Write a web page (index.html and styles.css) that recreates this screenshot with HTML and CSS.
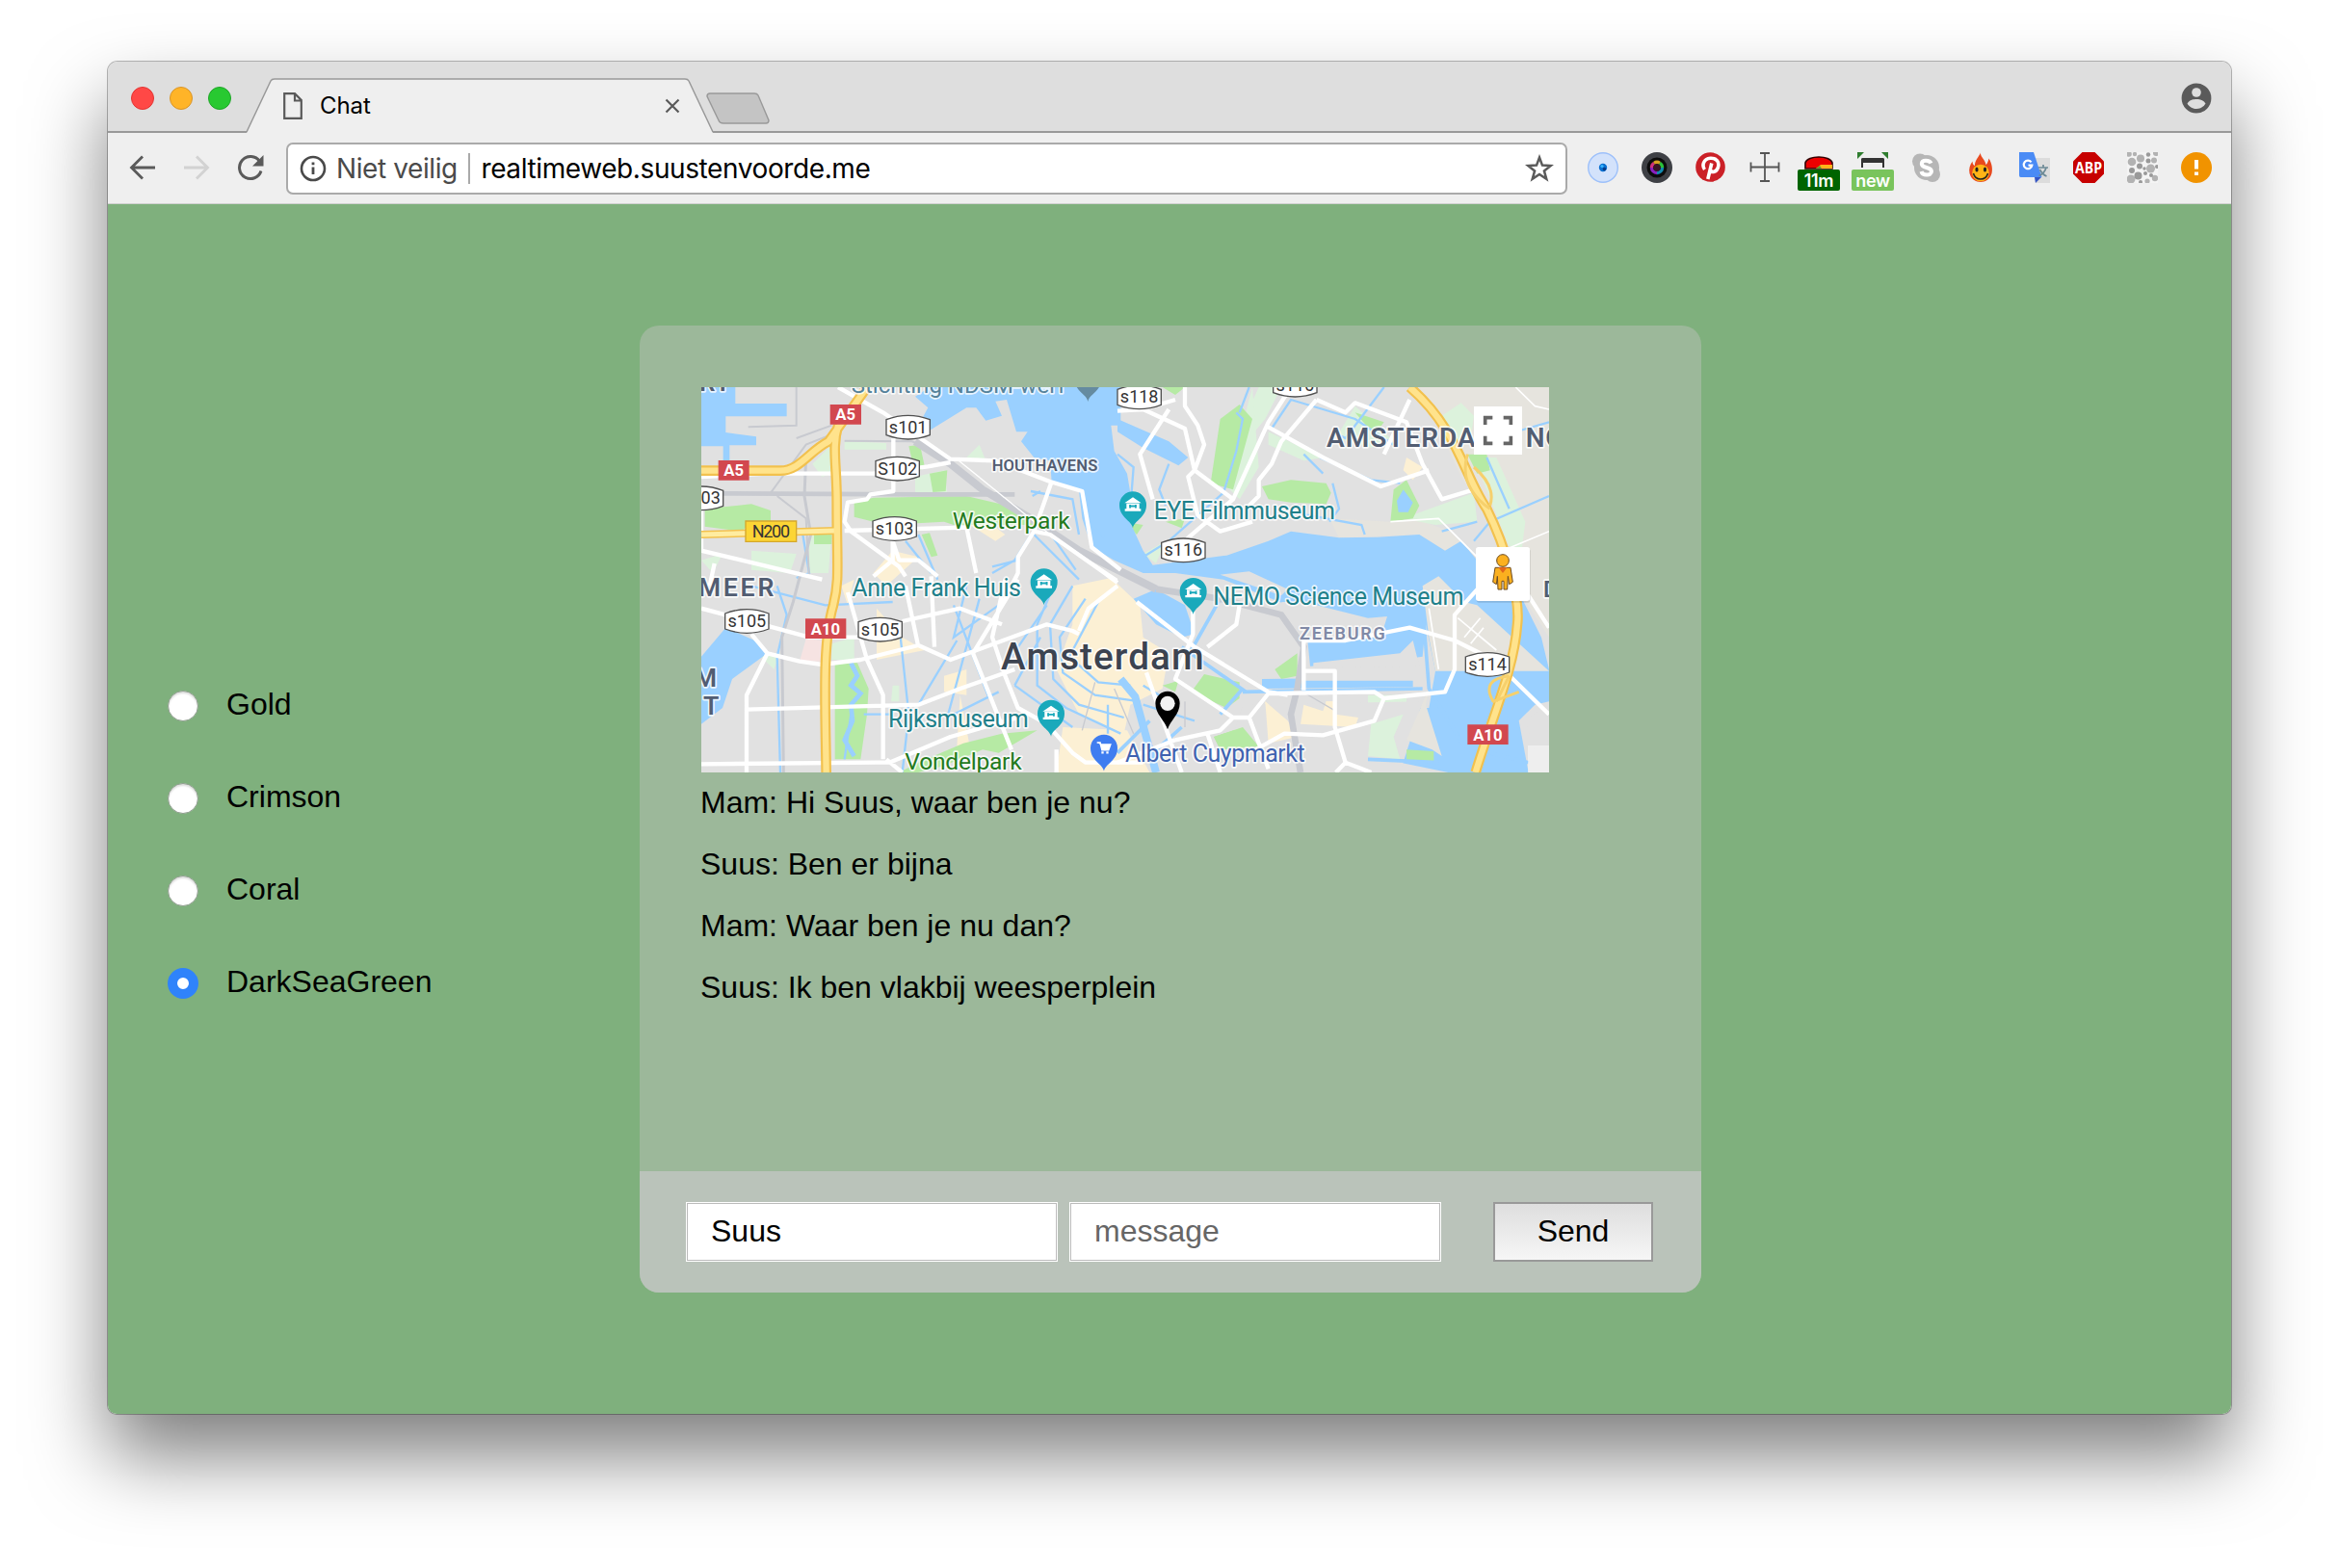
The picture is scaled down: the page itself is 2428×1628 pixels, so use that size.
FILE: index.html
```html
<!DOCTYPE html>
<html lang="nl">
<head>
<meta charset="utf-8">
<title>Chat</title>
<link rel="stylesheet" href="styles.css">
</head>
<body>
<div class="window">
  <header class="tabstrip">
    <div class="lights"><i class="light red"></i><i class="light amber"></i><i class="light green"></i></div>
    <div class="tab">
      <svg class="tab-shape" viewBox="0 0 546 57" width="546" height="57"><path d="M30 57L55 3Q56 1 59 1H485Q488 1 489 3L514 57Z" fill="#efefef"/><path d="M30 56L55 3Q56 1 59 1H485Q488 1 489 3L514 56" fill="none" stroke="#999" stroke-width="1.5"/></svg>
      <svg class="doc" viewBox="0 0 20 28" width="20" height="28"><path d="M1.2 1.2H12L18.8 8V26.8H1.2ZM12 1.2V8.5H18.8" fill="none" stroke="#5a5a5a" stroke-width="2.2"/></svg>
      <span class="tab-title">Chat</span>
      <svg class="close" viewBox="0 0 16 16" width="16" height="16"><path d="M1.5 1.5L14.5 14.5M14.5 1.5L1.5 14.5" stroke="#5a5a5a" stroke-width="2.2"/></svg>
    </div>
    <svg class="newtab" viewBox="0 0 66 33" width="66" height="33"><path d="M4 1H50Q53 1 54 3L65 29Q65 32 62 32H18Q14 32 13 29L1 4Q1 1 4 1Z" fill="#c4c4c4" stroke="#999" stroke-width="1.4"/></svg>
    <svg class="profile" viewBox="0 0 32 32" width="32" height="32"><circle cx="16" cy="16" r="15.4" fill="#5a5a5a"/><circle cx="16" cy="10" r="4.8" fill="#dedede"/><path d="M6.5 21.500C9 17.500 13 17 16 17S23 17.500 25.500 21.500C23 25.500 19.500 27 16 27S9 25.500 6.500 21.500Z" fill="#dedede"/></svg>
  </header>
  <nav class="toolbar">
    <div class="nav">
      <svg viewBox="0 0 28 28" width="28" height="28"><path d="M27 14H3M14 2.500L2.500 14L14 25.500" fill="none" stroke="#5a5a5a" stroke-width="2.800"/></svg>
      <svg viewBox="0 0 28 28" width="28" height="28"><path d="M1 14H25M14 2.500L25.500 14L14 25.500" fill="none" stroke="#d2d2d2" stroke-width="2.800"/></svg>
      <svg viewBox="0 0 28 28" width="28" height="28"><path d="M23.500 7.500A11.500 11.500 0 1 0 25 17.500" fill="none" stroke="#5a5a5a" stroke-width="3"/><path d="M27.500 1V12.500H16Z" fill="#5a5a5a"/></svg>
    </div>
    <div class="urlbar">
      <svg viewBox="0 0 28 28" width="28" height="28"><circle cx="14" cy="14" r="12" fill="none" stroke="#4a4a4a" stroke-width="2.600"/><path d="M14 12.500V20M14 7.500V10.200" stroke="#4a4a4a" stroke-width="2.800"/></svg>
      <span class="secure">Niet veilig</span>
      <span class="sep"></span>
      <span class="url">realtimeweb.suustenvoorde.me</span>
      <svg class="star" viewBox="0 0 30 30" width="30" height="30"><path d="M15 3.500L18 11.600L26.800 12L19.900 17.400L22.300 25.800L15 21L7.700 25.800L10.100 17.400L3.200 12L12 11.600Z" fill="none" stroke="#5a5a5a" stroke-width="2.500"/></svg>
    </div>
    <div class="exts">
      <span class="ext"><svg viewBox="0 0 32 32"><circle cx="16" cy="16" r="15.300" fill="#d3e2fb" stroke="#9dc0fa" stroke-width="1.400"/><circle cx="16" cy="16" r="4.200" fill="#0a6fd0"/><circle cx="15" cy="14.500" r="1.600" fill="#39b5ff"/><circle cx="17.500" cy="17.500" r="1.800" fill="#073a86"/></svg></span>
      <span class="ext"><svg viewBox="0 0 32 32"><circle cx="16" cy="16" r="16" fill="#3e4045"/><circle cx="16" cy="16" r="10.500" fill="#0c0c0c"/><g fill="none" stroke-width="3.400"><path d="M10.500 16A5.500 5.500 0 0 1 13 11.300" stroke="#d0307a"/><path d="M13 11.300A5.500 5.500 0 0 1 19 11.300" stroke="#d8a020"/><path d="M19 11.300A5.500 5.500 0 0 1 21.500 16" stroke="#2bc03a"/><path d="M21.500 16A5.500 5.500 0 0 1 16 21.500" stroke="#118ab0"/><path d="M16 21.500A5.500 5.500 0 0 1 10.500 16" stroke="#8a20c0"/></g><circle cx="16" cy="16" r="3.800" fill="#3a1526"/></svg></span>
      <span class="ext"><svg viewBox="0 0 32 32"><circle cx="15.500" cy="15.500" r="15.300" fill="#cb2027"/><path d="M9.500 18C6.500 14 8 7 15.500 6.300C22 6 25 10.500 23.500 15.500C22 21 17 21.500 15.200 18.500M16.800 11.500L12.800 28" fill="none" stroke="#fff" stroke-width="3.600"/></svg></span>
      <span class="ext"><svg viewBox="0 0 32 32"><path d="M16 1V30M11 1H21M11 30H21M1.500 15.500H30.500M1.500 10.500V20.500M30.500 10.500V20.500" stroke="#555" stroke-width="1.800"/></svg></span>
      <span class="ext"><svg viewBox="0 0 32 32"><path d="M2 17V11C4 3 28 3 30 11V17Z" fill="#e00" stroke="#300" stroke-width="1.600"/><path d="M13 17L18 13H30V17Z" fill="#ffb31a"/><path d="M13 17L17 14L19 17Z" fill="#5aa02c"/></svg><b class="badge dark">11m</b></span>
      <span class="ext"><svg viewBox="0 0 32 32"><path d="M0 0H7L0 7ZM32 0H25L32 7Z" fill="#2f7d2f"/><path d="M5 16V8Q5 7 6 7H26Q27 7 27 8V16" fill="none" stroke="#333" stroke-width="2"/><path d="M4 8Q4 6 6 6H26Q28 6 28 8V11H4Z" fill="#333"/></svg><b class="badge light-green">new</b></span>
      <span class="ext"><svg viewBox="0 0 32 32"><circle cx="16" cy="16" r="13" fill="#b6b6b6"/><circle cx="9" cy="9.500" r="8" fill="#b6b6b6"/><circle cx="22" cy="23" r="8" fill="#b6b6b6"/><path d="M20.500 11.500C19 8 11 7.500 10.800 12C10.800 17.500 21 14.500 21 20C20.800 25 11.500 24.500 10.500 20" fill="none" stroke="#fff" stroke-width="4"/></svg></span>
      <span class="ext"><svg viewBox="0 0 32 32"><path d="M16 0.500C15 4 21 8 21.500 13C23 12 24 9 24.500 6.500C28 12 28.500 18 27.500 22C26 28 21 31 16 31S6 28 4.500 22C3.500 17 5 13 7.500 9.500C7.500 12 8.500 13.500 10 14C9.500 9 14 5 16 .5Z" fill="#e8491d"/><circle cx="16" cy="21.500" r="8.800" fill="#ffb416"/><ellipse cx="12" cy="18" rx="1.600" ry="2.500" fill="#222"/><ellipse cx="20.500" cy="18" rx="1.600" ry="2.500" fill="#222"/><path d="M8.500 22Q10 28 16 28T23.500 22" fill="none" stroke="#222" stroke-width="1.500"/></svg></span>
      <span class="ext"><svg viewBox="0 0 32 32"><path d="M12 6H32V32H17Z" fill="#dcdcdc"/><path d="M16 26H23L17 32Z" fill="#3455c4"/><path d="M0 0H15L23.500 26H1.500Q0 26 0 24Z" fill="#4a8bf5"/><path d="M20 16H30M25 13V16M28 16Q26.500 22 20.500 24.500M21.500 18Q24 23 28.500 25" fill="none" stroke="#6d8a96" stroke-width="1.700"/><path d="M12.500 10.300A4.300 4.300 0 1 0 13.300 13.700H9.500" fill="none" stroke="#fff" stroke-width="2.200"/></svg></span>
      <span class="ext"><svg viewBox="0 0 32 32"><path d="M9.500 0H22.500L32 9.500V22.500L22.500 32H9.500L0 22.500V9.500Z" fill="#c70000"/><text x="16" y="21.800" class="abp" textLength="28" lengthAdjust="spacingAndGlyphs">ABP</text></svg></span>
      <span class="ext"><svg viewBox="0 0 32 32"><path d="M0 0H32V32H0Z" fill="#f4f4f4"/><g fill="#b2b2b2"><circle cx="5" cy="10" r="4.300"/><circle cx="14" cy="6.500" r="4"/><circle cx="24.500" cy="17" r="4.500"/><circle cx="4" cy="28" r="4.500"/><circle cx="28" cy="8.500" r="3"/><circle cx="2" cy="2" r="2.800"/><circle cx="8" cy="2" r="2.200"/><circle cx="30" cy="1" r="3"/><circle cx="29" cy="27" r="3.200"/><circle cx="21" cy="30" r="2.600"/></g><g fill="#999"><circle cx="11.500" cy="24.500" r="4"/><circle cx="13" cy="14.500" r="3"/><circle cx="22" cy="9" r="2.500"/><circle cx="5" cy="19" r="3"/><circle cx="19" cy="22" r="2"/><circle cx="22" cy="2.500" r="2.200"/><circle cx="25" cy="24" r="2"/><circle cx="31" cy="15" r="2"/><circle cx="14" cy="31" r="2"/><circle cx="18" cy="17" r="1.700"/></g></svg></span>
      <span class="ext"><svg viewBox="0 0 32 32"><circle cx="16" cy="16" r="16" fill="#f19300"/><path d="M16 8V17.500M16 20.500V24" stroke="#fff" stroke-width="4"/></svg></span>
    </div>
  </nav>
  <main class="page">
    <form class="colors">
      <label><i class="radio"></i>Gold</label>
      <label><i class="radio"></i>Crimson</label>
      <label><i class="radio"></i>Coral</label>
      <label><i class="radio checked"></i>DarkSeaGreen</label>
    </form>
    <section class="card">
      <div class="messages">
        <svg class="map" viewBox="24 21 2640 1200" width="880" height="400">
          <defs>
            <path id="shield" d="M-68-24Q0-50 68-24V24Q0 50-68 24Z" fill="#fff" stroke="#505050" stroke-width="4"/>
            <path id="pin" d="M0 72C-4 48-42 40-42 0A42 42 0 0 1 42 0C42 40 4 48 0 72Z"/>
            <g id="museum"><use href="#pin" fill="#1aa9bb"/><path d="M-26-6L0-24L26-6ZM-20-5H20V12H-20ZM-25 12H25V19H-25Z" fill="#fff"/><path d="M-11 9V-4M11 9V-4M-11 2H11" transform="translate(0 2) scale(.8)" stroke="#1aa9bb" stroke-width="7"/></g>
          </defs>
          <rect x="24" y="21" width="2640" height="1200" fill="#e1e1e1"/>
          <g fill="#e6e4de">
            <path d="M2260 21H2664V700L2520 500L2390 300Z"/>
            <path d="M1980 430L2170 440L2240 430L2360 470L2440 560L2340 530L2260 480L2010 490Z"/>
          </g>
          <g fill="#dcf2dc">
            <path d="M370 260L430 200L430 290L400 300ZM690 300L780 280L790 350L690 350ZM840 250L890 200L910 250ZM24 560L90 540L60 600ZM180 530L320 540L300 600L180 590ZM360 470L430 470L420 600L360 600Z"/>
            <path d="M1760 21H1830L1780 120L1730 180L1720 110ZM1790 160L1960 240L1900 250L1790 200ZM2060 80L2170 180L2110 210L2000 180ZM2330 110L2390 70L2430 110L2420 180L2380 190ZM2210 430L2430 350L2440 440L2310 450ZM2430 240L2500 240L2590 440L2580 520H2540Z"/>
            <path d="M430 820L500 800L500 870H430ZM200 850L270 850L250 900ZM2040 740L2190 730L2100 780ZM2100 980H2220V1060L2100 1120Z"/>
            <path d="M1400 540L1470 500L1440 570ZM470 190L600 195V215H470ZM620 950L640 950V1000H615ZM1740 21L1660 330L1700 370L1760 270Z"/>
          </g>
          <g fill="#fcf0d4">
            <path d="M790 430L880 410L970 480L940 500L860 450ZM620 530L700 550L600 640L560 600Z"/>
            <path d="M1180 640L1300 615L1390 700L1400 800L1480 850L1460 960L1360 1010L1340 1100L1200 1040L1130 900L1180 760Z"/>
            <path d="M1150 1080L1350 1090L1420 1221H1130ZM780 920L850 900L850 980L780 970ZM570 710L650 800L720 840L570 870ZM1780 1000L1850 1060L1880 1110L1790 1130ZM1900 1010L1960 1030L1970 1000L2000 1000L2000 1040L2070 1050L2060 1080L1890 1070ZM2220 240L2270 270L2240 310L2210 280ZM830 980L860 1140H820ZM460 640L500 620L480 700Z"/>
          </g>
          <path d="M350 805L405 810L400 875H330Z" fill="#f6e3e2"/>
          <g fill="#b6eaa4">
            <path d="M670 205L705 200L720 270L690 290ZM500 380L560 365L850 360L1020 400L1080 450H810L780 440L600 450L500 425ZM35 400L180 385L240 405V450L170 450L150 470L35 455ZM735 290L790 280L785 345L745 348ZM710 480L735 475L760 545L740 550ZM375 480H430V510H375Z"/>
            <path d="M1640 120L1700 75L1740 120L1680 340L1610 320ZM1770 330L1860 310L1970 320L1985 350L1970 385L1860 380L1790 370ZM2170 440L2180 340L2220 310L2260 390L2240 430ZM2060 100L2150 130L2120 170ZM2410 230L2470 230L2480 280L2440 290ZM1470 440L1530 430L1520 460ZM1460 21H1530L1500 45ZM1340 440L1400 450L1380 480Z"/>
            <path d="M440 880L510 880L545 960L540 1040L520 1180L440 1180ZM840 1130L960 1100L1070 1090L950 1160L900 1150L780 1200L700 1221H640L700 1190ZM1590 915L1700 940L1700 990L1660 1020L1550 970ZM1810 900L1880 850L1880 920L1830 930ZM1620 1110L1710 1080L1760 1140L1640 1150ZM2220 1150L2305 1155V1190L2220 1185ZM1460 950L1510 935L1500 970Z"/>
          </g>
          <g fill="#9ad0ff">
            <path d="M24 21H130V72H290V112H100V162L195 175V202H112V250H92V205H24Z"/>
            <path d="M735 21H1330V140H1300L1310 220L1350 290L1360 350L1340 400L1400 530L1430 575L1660 545L1790 500L1860 470L2010 490L2130 488L2260 480L2340 530L2390 500L2440 560L2520 600L2560 640L2640 800L2664 900V1000L2620 1010L2570 1060L2600 1221H2350L2200 1190L2180 1110L2230 1020L2290 1020L2310 905L2280 760L2270 860L2200 870L1920 890L1910 790L1850 700L1650 620L1500 600L1400 600L1310 560L1240 520L1210 430L1200 345L1115 315L1110 250L1060 240L1020 190L1040 160L1005 160L975 60L940 65L960 110L910 125L880 85L850 85L720 165L700 140L730 85L690 50Z"/>
            <path d="M24 860L100 770L190 810L230 850L120 930L90 1020L24 1070Z"/>
            <path d="M1370 680L1440 650L1530 700L1560 790L1520 800L1440 760ZM2190 375L2210 340L2240 380L2225 410L2195 410ZM1770 930L2240 925V955L1770 960ZM1320 120L1480 190L1540 240L1510 265L1400 210L1320 160Z"/>
          </g>
          <g fill="#e1e1e1">
            <path d="M1560 850L1700 700L1800 740L1850 800L1830 880L1740 930ZM1600 800L1690 710L1730 730L1620 830ZM1830 690L1900 690L2100 740L2160 735L2140 800L1900 810ZM1930 880L2200 850L2240 810L2260 890L1930 895ZM1880 920H2270V935H1880ZM1710 1010L2270 1000L2200 1221H1640Z"/>
            <path d="M2590 1060L2664 1010V1221H2640ZM1640 605L1730 595L1850 650L1830 670Z"/>
          </g>
          <path d="M1780 1000L1850 1060L1880 1110L1790 1130ZM1900 1010L1960 1030L1970 1000H2000V1040L2070 1050L2060 1080L1890 1070Z" fill="#fcf0d4"/>
          <path d="M2110 1070L2210 1040L2180 1110L2200 1180L2100 1170Z" fill="#dcf2dc"/>
          <path d="M2270 640L2320 610L2400 690L2440 700L2664 905H2310L2290 800ZM2500 500L2664 560V800L2560 640ZM2290 960L2280 1010L2330 1170L2300 1150L2220 1120Z" fill="#e6e4de"/>
          <path d="M1620 1110L1710 1080L1760 1140L1640 1150ZM2220 1150L2305 1155V1190L2220 1185Z" fill="#b6eaa4"/>
          <g fill="none" stroke="#9ad0ff" stroke-width="7">
            <path d="M1050 345L1180 370L1200 480M1115 310L1070 450L1000 560L930 600M1060 480L1200 620M1120 490L1190 590M930 580L1010 560M1230 440L1280 490M660 500L740 600M700 480L760 620M340 480L360 600L320 615M1055 360L1080 345"/>
            <path d="M1690 100L1710 120L1690 220L1650 350L1480 500L1400 550M1730 21L1700 100M1800 150L1860 60L2060 120L2180 200M1950 240L2110 310L2200 320M1900 230L1960 290M2150 21L2030 180L2010 170M2470 240L2540 400M2430 500L2480 440L2664 360M2330 470L2440 440M1320 230L1370 270L1360 400M1480 260L1450 340L1470 390M1860 410L2080 450L2090 480M2490 180L2664 130M1990 320L2010 400L1980 440"/>
            <path d="M260 640L290 730L260 860L270 1221M180 640L410 700L620 690M490 1040L470 1180M530 1040L620 1040M640 760L670 1040L650 1221M810 700L920 990M820 810L700 1010M850 640L810 800L950 700M890 680L790 1050L950 970M1130 620L1070 760V950L1160 1020L1330 1100M1180 640L1110 760L1120 930L1200 1010L1340 1050M1220 680L1140 800L1150 910L1250 980L1390 1000M1260 690L1170 860L1260 940L1360 950M1000 950L1180 1080M1290 1010V1100M1080 800L1000 950M1400 950L1500 1010M1400 1010L1560 1060M1100 700L990 860"/>
            <path d="M1320 1160L1420 1060M1430 1160L1520 1080M1520 830L1720 970M1640 680L1550 840M1710 960L1640 1040M1710 970L2270 960M2270 700L2290 960L2400 1140L2600 1190M2100 1180L2320 1190" stroke-width="11"/>
            <path d="M1330 930L1375 985L1440 1221" stroke-width="24"/>
            <path d="M490 880L510 920L490 950L520 975L490 1010L495 1060L470 1120L500 1170" stroke-width="14"/>
          </g>
          <g fill="none" stroke="#c8cad0">
            <path d="M90 352L700 355L1000 355" stroke-width="14"/>
            <path d="M320 21V140L170 145M430 140L320 180M470 188L680 190L780 230M240 350L350 200L450 160M260 360L350 430L360 615" stroke-width="6"/>
            <path d="M350 240L345 360L365 480L310 690L275 800L280 1221" stroke-width="9"/>
            <path d="M690 190L800 260L900 340L1050 430L1200 530L1320 590L1440 650" stroke-width="24"/>
            <path d="M1440 650L1640 680L1830 730L1900 830L1880 960L1860 1040L1890 1221" stroke-width="20"/>
            <path d="M1250 940L1210 1090M1310 960L1370 1100M1880 960L2000 1030M1530 1000V1080" stroke-width="4"/>
          </g>
          <g fill="none" stroke="#fff" stroke-width="13" stroke-linejoin="round">
            <path d="M450 21L590 100L720 190L800 245L940 250L1110 315L1210 345L1240 520L1330 590M24 300L230 290H560L730 268L800 255M622 180V345L550 355L540 370L480 380L470 440L490 470L640 580L660 610M1115 315L1060 470L1110 480L1280 600L1320 630M1060 470L1010 550V600L960 700M470 468L850 458L880 600M24 380V530L400 620M620 500L640 560L700 560L760 610M65 570L50 640M620 500V560L560 610"/>
            <path d="M820 245L1110 480L1320 620" stroke-width="4"/>
            <path d="M1530 21V80L1570 140L1590 200L1560 280L1680 370L1790 130L1860 21M1480 90L1390 230L1430 370M1400 90L1530 150L1560 280M1940 60L1830 190L1800 260L1760 310V360L1730 390M1780 140L1960 240L2140 330L2290 280M1940 60L2030 100L2060 70L2220 130L2270 260L2330 370L2430 340L2500 460L2520 520M2230 60L2150 230M1560 280L1540 300L1570 420L1640 470L1740 440M1530 560L1540 490L1680 370M1320 95L1400 90L1500 60"/>
            <path d="M24 710L250 770L360 800L520 800M180 790L230 850L330 875L400 885L520 870L700 825L800 870L1100 760L1180 780L1200 790M230 850L165 980V1221M165 1025L700 1010L830 960L1000 900M24 1195L570 1190L610 1190L800 1110L1010 1050M480 660L540 870L590 980V1180M660 640L700 830M740 610L750 830M650 750L830 710L960 760M970 620L930 800L970 920L1010 1020L1100 1070L1180 1160L1221 1190H1400M1010 620L870 850L990 1150M1200 780L1230 710L1320 640M600 1180L650 1221M1130 1150V1221"/>
            <path d="M1380 690L1560 830L1790 970L1850 980M1555 720V790L1500 930L1680 1050L1730 1050L1790 975L2120 970L2150 990L2120 1060L1960 1105L1840 1100L1750 1150M1700 700L1690 760L1600 830M1900 800V965M1905 810L2030 810L2230 770L2370 810L2490 870L2664 1040M1905 905H1997V1080L2030 1190L2110 1221M2150 990L2340 970L2370 900V730L2450 640M2600 670L2664 770M1730 1050L1790 1210M1500 1120L1640 1090L1680 1050M1410 910L1480 1110L1520 1221M1600 1100L1640 1221M1320 1190L1500 1120M2030 1190L2000 1221"/>
            <path d="M2560 21L2620 80L2664 90M2170 440L2320 430L2440 550M2520 530L2664 470M2290 710L2320 900M2380 740L2500 840M2400 800L2450 740M2420 820L2460 770" stroke-width="5"/>
          </g>
          <g fill="none" stroke-linejoin="round">
            <path d="M24 281H270C330 281 360 220 420 190L540 21M450 140C430 210 446 260 446 380C446 580 455 620 435 700C400 820 410 1000 413 1221M2230 21C2380 150 2400 300 2470 400C2530 520 2575 680 2565 760C2555 900 2490 1040 2435 1221" stroke="#f2c14e" stroke-width="32"/>
            <path d="M24 480L440 468" stroke="#f2c14e" stroke-width="24"/><path d="M24 480L440 468" stroke="#ffeca0" stroke-width="15"/>
            <path d="M24 281H270C330 281 360 220 420 190L540 21M450 140C430 210 446 260 446 380C446 580 455 620 435 700C400 820 410 1000 413 1221M2230 21C2380 150 2400 300 2470 400C2530 520 2575 680 2565 760C2555 900 2490 1040 2435 1221" stroke="#ffe38c" stroke-width="19"/>
            <path d="M2410 230Q2380 330 2480 400M2430 270Q2500 330 2480 390M2540 920Q2450 930 2490 1000L2570 970M2500 1000L2540 920" stroke="#f6d06c" stroke-width="9"/>
          </g>
          <g class="halo">
            <text x="18" y="34" class="area" font-size="78">RT</text>
            <text x="491" y="40" fill="#56839b" font-size="72" textLength="667">Stichting NDSM-werf</text>
            <text x="929" y="283" class="area" font-size="50" textLength="331">HOUTHAVENS</text>
            <text x="1971" y="208" class="area" font-size="84" textLength="466">AMSTERDA</text>
            <text x="2440" y="208" class="area" font-size="84">M</text>
            <text x="2591" y="208" class="area" font-size="84">NO</text>
            <text x="14" y="671" class="area" font-size="80" textLength="238">MEER</text>
            <text x="2" y="955" class="area" font-size="80">M</text>
            <text x="30" y="1040" class="area" font-size="80">T</text>
            <text x="2646" y="676" class="area" font-size="70">D</text>
            <text x="1887" y="806" fill="#8089a6" font-size="54" font-weight="600" textLength="266">ZEEBURG</text>
            <text x="806" y="461" class="park" textLength="366">Westerpark</text>
            <text x="658" y="1212" class="park" textLength="364">Vondelpark</text>
            <text x="1433" y="431" class="poi" textLength="565">EYE Filmmuseum</text>
            <text x="493" y="673" class="poi" textLength="527">Anne Frank Huis</text>
            <text x="606" y="1080" class="poi" textLength="437">Rijksmuseum</text>
            <text x="1618" y="699" class="poi" textLength="780">NEMO Science Museum</text>
            <text x="1344" y="1189" fill="#3f62b0" font-size="75" textLength="560">Albert Cuypmarkt</text>
            <text x="957" y="900" fill="#3c4350" font-size="116" font-weight="500" textLength="632">Amsterdam</text>
          </g>
          <g class="road">
            <use href="#shield" x="668" y="146"/><text x="668" y="164">s101</text>
            <use href="#shield" x="635" y="275"/><text x="635" y="293">S102</text>
            <use href="#shield" x="24" y="367"/><text x="24" y="385">s103</text>
            <use href="#shield" x="626" y="462"/><text x="626" y="480">s103</text>
            <use href="#shield" x="166" y="750"/><text x="166" y="768">s105</text>
            <use href="#shield" x="581" y="776"/><text x="581" y="794">s105</text>
            <use href="#shield" x="1388" y="52"/><text x="1388" y="70">s118</text>
            <use href="#shield" x="1873" y="14"/><text x="1873" y="33">s116</text>
            <use href="#shield" x="1525" y="529"/><text x="1525" y="547">s116</text>
            <use href="#shield" x="2472" y="885"/><text x="2472" y="903">s114</text>
            <path d="M162 438H320V502H162Z" fill="#fcd535" stroke="#d4a72c" stroke-width="4"/><text x="241" y="488" textLength="118">N200</text>
            <path d="M425 75H522V137H425ZM77 249H173V311H77ZM348 742H475V804H348ZM2410 1072H2537V1134H2410Z" fill="#d2484f"/>
            <g class="motorway"><text x="473" y="124">A5</text><text x="125" y="298">A5</text><text x="411" y="791">A10</text><text x="2473" y="1121">A10</text></g>
          </g>
          <use href="#pin" x="1228" y="-6" fill="#658ba0"/>
          <use href="#museum" x="1368" y="388"/><use href="#museum" x="1091" y="628"/><use href="#museum" x="1113" y="1037"/><use href="#museum" x="1556" y="657"/>
          <g transform="translate(1278 1145)"><use href="#pin" fill="#3f7df0"/><path d="M-22-17H-12L-6 6H14L20-11H-10" fill="#fff" stroke="#fff" stroke-width="5"/><path d="M-8 14H15" stroke="#fff" stroke-width="7" stroke-dasharray="7 8"/></g>
          <path d="M1476 1087C1468 1060 1438 1040 1438 1006A38 38 0 0 1 1514 1006C1514 1040 1484 1060 1476 1087Z" fill="#000"/><circle cx="1476" cy="1006" r="23" fill="#f1f1f1"/>
          <rect x="2598" y="1137" width="66" height="84" fill="#f5f5f5" opacity=".65"/>
          <rect x="2430" y="81" width="150" height="150" fill="#fff"/>
          <path d="M2465 138V116H2488M2522 116H2545V138M2545 173V196H2522M2488 196H2465V173" fill="none" stroke="#666" stroke-width="11"/>
          <rect x="2438" y="524" width="168" height="168" rx="8" fill="#000" opacity=".12"/>
          <rect x="2436" y="519" width="168" height="168" rx="8" fill="#fff"/>
          <path d="M2496 583H2544L2551 628L2540 635L2536 610L2534 651H2523V625H2517V651H2505L2503 610L2500 635L2489 628Z" fill="#fbb01f" stroke="#6b4a20" stroke-width="3"/><path d="M2506 582H2534L2520 600Z" fill="#e2661b"/><circle cx="2520" cy="561" r="19" fill="#fbb01f" stroke="#6b4a20" stroke-width="3"/>
        </svg>
        <p>Mam: Hi Suus, waar ben je nu?</p>
        <p>Suus: Ben er bijna</p>
        <p>Mam: Waar ben je nu dan?</p>
        <p>Suus: Ik ben vlakbij weesperplein</p>
      </div>
      <form class="compose">
        <div class="field">Suus</div>
        <div class="field placeholder">message</div>
        <div class="send">Send</div>
      </form>
    </section>
  </main>
</div>
</body>
</html>
```
FILE: styles.css
```css
* { box-sizing: border-box; }
body { margin: 0; background: #fff; width: 2428px; height: 1628px; padding: 64px 0 0 112px; overflow: hidden; font-family: "Liberation Sans", Arial, sans-serif; }
svg { display: block; flex: none; }
.window { width: 2204px; height: 1404px; border-radius: 10px 10px 9px 9px; box-shadow: 0 0 0 1px rgba(0,0,0,.28), 0 44px 80px rgba(0,0,0,.5); overflow: hidden; display: flex; flex-direction: column; }
.tabstrip { height: 74px; flex: none; background: #dedede; border-bottom: 2px solid #999; display: flex; align-items: flex-start; }
.lights { display: flex; gap: 16px; padding: 26px 0 0 24px; width: 114px; }
.light { width: 24px; height: 24px; border-radius: 50%; flex: none; border: 1px solid; }
.red { background: #ff4846; border-color: #e33432; }
.amber { background: #ffb428; border-color: #d99428; }
.green { background: #28c931; border-color: #1fa528; }
.tab { position: relative; width: 516px; height: 57px; margin-top: 17px; display: flex; align-items: center; padding-left: 68px; }
.tab-shape { position: absolute; left: 0; top: 0; }
.doc, .tab-title, .close { position: relative; }
.tab-title { margin-left: 18px; font: 24px/30px Inter, sans-serif; letter-spacing: -.1px; width: 358px; }
.close { width: 16px; }
.newtab { margin: 32px 0 0 -9px; }
.profile { margin: 22px 20px 0 auto; }
.toolbar { height: 74px; flex: none; background: #efefef; border-bottom: 1px solid #cfcfcf; display: flex; align-items: center; }
.nav { display: flex; gap: 28px; padding: 0 0 2px 22px; width: 185px; }
.urlbar { width: 1330px; height: 54px; border: 2px solid #aaa; border-radius: 7px; background: #fff; display: flex; align-items: center; padding-left: 12px; font: 28px/36px Inter, sans-serif; }
.secure { color: #4a4a4a; margin-left: 10px; width: 137px; letter-spacing: -.4px; white-space: nowrap; }
.sep { width: 1.500px; height: 32px; background: #aaa; }
.url { margin-left: 12px; letter-spacing: -.4px; }
.star { margin: 0 12px 0 auto; }
.exts { display: flex; gap: 12px; margin-left: 15px; padding-bottom: 1px; }
.ext { position: relative; width: 44px; height: 32px; display: flex; justify-content: center; }
.ext svg { width: 32px; height: 32px; }
.badge { position: absolute; left: 0; top: 18px; width: 44px; height: 22px; border-radius: 2px; color: #fff; font: 600 18px/23px Inter, sans-serif; letter-spacing: -.3px; text-align: center; }
.dark { background: #006400; }
.light-green { background: #79c45c; }
.abp { font: bold 16px "Open Sans", sans-serif; fill: #fff; text-anchor: middle; }
.page { flex: 1; background: #7fb07d; display: flex; align-items: flex-start; font-size: 32px; }
.colors { width: 552px; padding: 472px 0 0 62px; display: flex; flex-direction: column; }
.colors label { display: flex; align-items: center; height: 96px; line-height: 36px; padding-bottom: 2px; }
.radio { width: 32px; height: 32px; border-radius: 50%; background: #fff; border: 1px solid #8f9d8e; box-shadow: inset 0 2px 2px #ddd; margin: 3px 29px 0 0; }
.checked { border: 10.500px solid #2f83fb; box-shadow: none; }
.card { width: 1102px; margin-top: 126px; border-radius: 20px; overflow: hidden; background: #9cb89a; }
.messages { height: 878px; padding: 64px 64px 0; }
.messages p { margin: 0 0 28px; line-height: 36px; white-space: nowrap; text-indent: -1px; }
.messages .map { margin-bottom: 13px; }
.compose { height: 126px; background: #bac3ba; display: flex; align-items: center; padding-left: 48px; }
.field { width: 386px; height: 62px; background: #fff; border: 1px solid #fff; box-shadow: inset 0 0 0 1px #bbb; margin-right: 12px; padding: 0 25px; line-height: 59px; }
.placeholder { color: #666; margin-right: 54px; }
.send { width: 166px; height: 62px; border: 2px solid #999; background: linear-gradient(#dedede, #f6f6f6); text-align: center; line-height: 57px; }
.map text { font-family: Roboto, sans-serif; }
.halo text { paint-order: stroke; stroke: #fff; stroke-opacity: .8; stroke-width: 10px; stroke-linejoin: round; }
.area { fill: #525d72; font-weight: 600; letter-spacing: 2px; }
.park { fill: #237a1e; font-size: 74px; }
.poi { fill: #20808a; font-size: 75px; }
.road text { font-size: 54px; text-anchor: middle; fill: #333; }
.road .motorway text { fill: #fff; font-weight: 700; font-size: 50px; }
```
